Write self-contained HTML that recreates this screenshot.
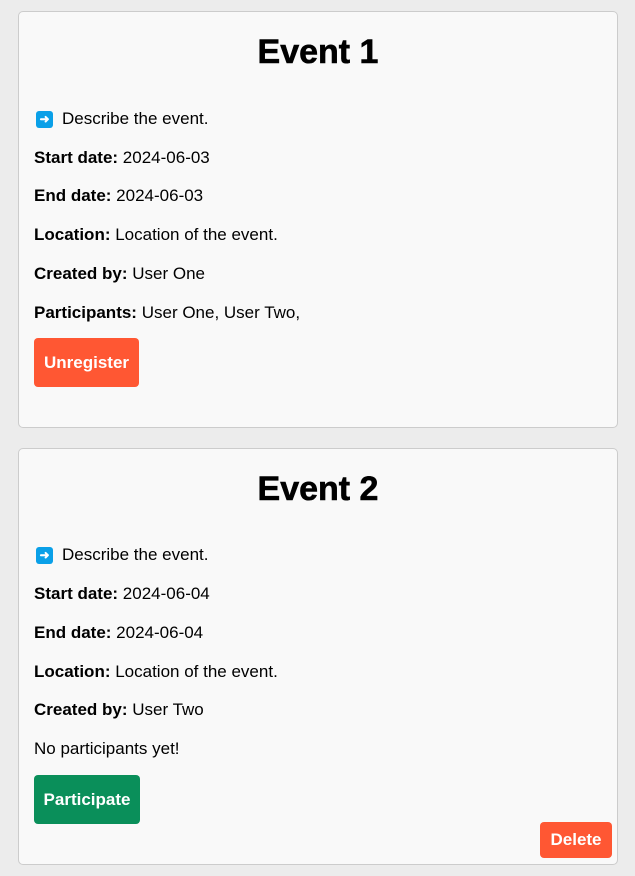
<!DOCTYPE html>
<html><head><style>
body{margin:0;background:#ececec;font-family:"Liberation Sans",Arial,sans-serif;width:635px;height:876px;position:relative;overflow:hidden}
.card{position:absolute;left:18px;width:598px;background:#f9f9f9;border:1px solid #ccc;border-radius:5px}
.t{position:absolute;left:0;right:0;text-align:center;font-size:34px;font-weight:bold;color:#000;-webkit-text-stroke:0.6px #000}
.l{position:absolute;left:15px;font-size:17px;color:#000;line-height:20px;white-space:nowrap}
.ic{display:inline-block;width:17px;height:17px;background:#0aa0e8;border-radius:3px;vertical-align:1px;margin-right:9px;margin-left:2px;color:#fff;font-size:12px;line-height:17px;text-align:center;font-weight:bold}
.btn{position:absolute;left:15px;width:105px;height:49px;border-radius:4px;color:#fff;font-weight:bold;font-size:17px;line-height:49px;text-align:center}
</style></head><body>
<div class="card" style="top:11px;height:415px">
<div class="t" style="top:21px">Event 1</div>
<div class="l" style="top:97px"><span class="ic">➜</span>Describe the event.</div>
<div class="l" style="top:136px"><b>Start date:</b> 2024-06-03</div>
<div class="l" style="top:174px"><b>End date:</b> 2024-06-03</div>
<div class="l" style="top:213px"><b>Location:</b> Location of the event.</div>
<div class="l" style="top:252px"><b>Created by:</b> User One</div>
<div class="l" style="top:291px"><b>Participants:</b> User One, User Two,</div>
<div class="btn" style="top:326px;background:#ff5733">Unregister</div>
</div>
<div class="card" style="top:448px;height:415px">
<div class="t" style="top:21px">Event 2</div>
<div class="l" style="top:96px"><span class="ic">➜</span>Describe the event.</div>
<div class="l" style="top:135px"><b>Start date:</b> 2024-06-04</div>
<div class="l" style="top:174px"><b>End date:</b> 2024-06-04</div>
<div class="l" style="top:213px"><b>Location:</b> Location of the event.</div>
<div class="l" style="top:251px"><b>Created by:</b> User Two</div>
<div class="l" style="top:290px">No participants yet!</div>
<div class="btn" style="top:326px;background:#0a8f5a;width:106px">Participate</div>
<div style="position:absolute;left:521px;top:373px;width:72px;height:36px;border-radius:4px;background:#ff5733;color:#fff;font-weight:bold;font-size:17px;line-height:36px;text-align:center">Delete</div>
</div>
</body></html>
